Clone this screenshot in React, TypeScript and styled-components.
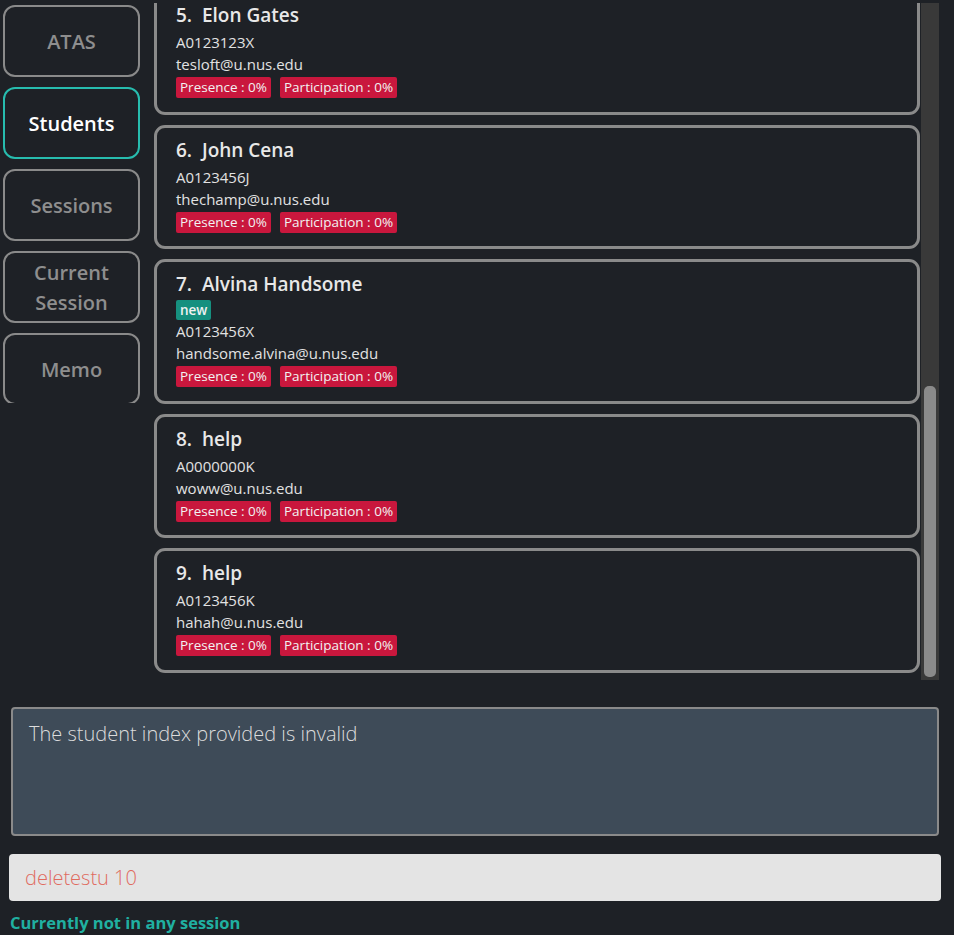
import React from 'react';
import styled, { createGlobalStyle } from 'styled-components';

const GlobalStyle = createGlobalStyle`
  html, body {
    margin: 0;
    padding: 0;
    background-color: #1e2126;
  }
  * {
    box-sizing: border-box;
  }
`;

const Window = styled.div`
  width: 954px;
  height: 935px;
  background-color: #1e2126;
  font-family: 'Open Sans', 'Noto Sans', sans-serif;
  display: flex;
  flex-direction: column;
  overflow: hidden;
`;

const TopArea = styled.div`
  display: flex;
  gap: 14px;
  padding: 3px 15px 0 3px;
  height: 680px;
  flex-shrink: 0;
`;

const Sidebar = styled.div`
  width: 137px;
  height: 400px;
  padding-top: 2px;
  display: flex;
  flex-direction: column;
  gap: 10px;
  overflow: hidden;
  flex-shrink: 0;
`;

const NavButton = styled.div<{ $active?: boolean }>`
  height: 72px;
  flex-shrink: 0;
  border: 2.5px solid ${(p) => (p.$active ? '#27bcae' : '#8a8a8a')};
  border-radius: 12px;
  display: flex;
  align-items: center;
  justify-content: center;
  text-align: center;
  color: ${(p) => (p.$active ? '#ffffff' : '#8e8e8e')};
  font-size: 20px;
  font-weight: 600;
  line-height: 30px;
  padding-top: 2px;
`;

const ListPanel = styled.div`
  flex: 1;
  display: flex;
`;

const ListViewport = styled.div`
  flex: 1;
  overflow: hidden;
`;

const CardStack = styled.div`
  margin-top: -12.75px;
  display: flex;
  flex-direction: column;
  gap: 10px;
`;

const Card = styled.div`
  border: 3px solid #8a8a8a;
  border-radius: 11px;
  padding: 7px 20px 13.5px 19px;
  display: flex;
  flex-direction: column;
  align-items: flex-start;
`;

const Name = styled.div`
  font-size: 19px;
  font-weight: 600;
  color: #e8e8e8;
  line-height: 31px;
  white-space: pre;
`;

const Detail = styled.div`
  font-size: 15px;
  color: #e2e2e2;
  line-height: 22px;
`;

const TagRow = styled.div`
  display: flex;
  gap: 9px;
  margin-top: 2px;
`;

const Tag = styled.span<{ $kind?: 'new' | 'stat' }>`
  background-color: ${(p) => (p.$kind === 'new' ? '#16907f' : '#c9173d')};
  color: #f2f2f2;
  font-size: 13.5px;
  font-weight: ${(p) => (p.$kind === 'new' ? 600 : 500)};
  line-height: ${(p) => (p.$kind === 'new' ? '20px' : '21px')};
  padding: 0 4px;
  border-radius: 2px;
`;

const ScrollTrack = styled.div`
  width: 18px;
  margin-left: 1px;
  background-color: #393939;
  display: flex;
  flex-direction: column;
  justify-content: flex-end;
  align-items: center;
  padding-bottom: 3px;
`;

const ScrollThumb = styled.div`
  width: 12px;
  height: 291px;
  background-color: #8a8a8a;
  border-radius: 5px;
`;

const ResultBox = styled.div`
  margin: 27px 15px 0 11px;
  height: 131px;
  background-color: #3e4b58;
  border: 2.5px solid #8a8a8a;
  border-radius: 4px;
  padding: 11px 16px 10px;
  color: #dcdcdc;
  font-size: 20px;
  font-weight: 300;
  line-height: 28px;
`;

const CommandBox = styled.div`
  margin: 18px 13px 0 9px;
  height: 48px;
  background-color: #e4e4e4;
  border-radius: 4px;
  padding: 0 16px;
  display: flex;
  align-items: center;
  color: #e06a5e;
  font-size: 20px;
  font-weight: 300;
`;

const Status = styled.div`
  margin: 10px 0 0 10px;
  color: #20b0a1;
  font-size: 16.5px;
  font-weight: 700;
  line-height: 24px;
`;

type Student = {
  index: number;
  name: string;
  id: string;
  email: string;
  isNew?: boolean;
};

const students: Student[] = [
  { index: 5, name: 'Elon Gates', id: 'A0123123X', email: 'tesloft@u.nus.edu' },
  { index: 6, name: 'John Cena', id: 'A0123456J', email: 'thechamp@u.nus.edu' },
  { index: 7, name: 'Alvina Handsome', id: 'A0123456X', email: 'handsome.alvina@u.nus.edu', isNew: true },
  { index: 8, name: 'help', id: 'A0000000K', email: 'woww@u.nus.edu' },
  { index: 9, name: 'help', id: 'A0123456K', email: 'hahah@u.nus.edu' },
];

const navItems = ['ATAS', 'Students', 'Sessions', 'Current Session', 'Memo'];

const StudentCard: React.FC<{ student: Student }> = ({ student }) => (
  <Card>
    <Name>{`${student.index}.  ${student.name}`}</Name>
    {student.isNew && <Tag $kind="new">new</Tag>}
    <Detail>{student.id}</Detail>
    <Detail>{student.email}</Detail>
    <TagRow>
      <Tag>Presence : 0%</Tag>
      <Tag>Participation : 0%</Tag>
    </TagRow>
  </Card>
);

const App: React.FC = () => {
  return (
    <Window>
      <GlobalStyle />
      <TopArea>
        <Sidebar>
          {navItems.map((item) => (
            <NavButton key={item} $active={item === 'Students'}>
              {item === 'Current Session' ? (
                <span>
                  Current
                  <br />
                  Session
                </span>
              ) : (
                item
              )}
            </NavButton>
          ))}
        </Sidebar>
        <ListPanel>
          <ListViewport>
            <CardStack>
              {students.map((s) => (
                <StudentCard key={s.index} student={s} />
              ))}
            </CardStack>
          </ListViewport>
          <ScrollTrack>
            <ScrollThumb />
          </ScrollTrack>
        </ListPanel>
      </TopArea>
      <ResultBox>The student index provided is invalid</ResultBox>
      <CommandBox>deletestu 10</CommandBox>
      <Status>Currently not in any session</Status>
    </Window>
  );
};

export default App;
